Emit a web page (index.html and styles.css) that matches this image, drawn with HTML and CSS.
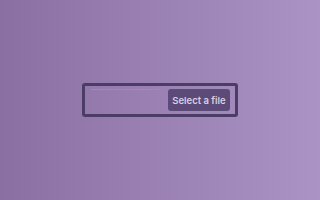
FILE: index.html
```html
<!DOCTYPE html>
<html lang="en">

<head>
    <meta charset="UTF-8">
    <title>File picker</title>
    <link rel="stylesheet" href="styles.css">
</head>

<body>
    <div class="file-field">
        <div class="file-name"></div>
        <button class="file-button">Select a file</button>
    </div>
</body>

</html>
```

FILE: styles.css
```css
* {
    box-sizing: border-box;
}

html,
body {
    height: 100%;
}

body {
    margin: 0;
    background: linear-gradient(to right, #8a6fa2, #ab93c6);
    font-family: Inter, "Noto Sans", sans-serif;
    display: flex;
    align-items: center;
    justify-content: center;
}

.file-field {
    width: 156px;
    height: 34px;
    border: 3px solid #4c3d66;
    border-radius: 3px;
    padding: 3px 5px 3px 3px;
    display: flex;
    gap: 7px;
}

.file-name {
    flex: 1;
    border-top: 1px solid #9d86cf;
    margin-left: 3px;
}

.file-button {
    width: 62px;
    height: 22px;
    border: 0;
    border-radius: 3px;
    background: #5c4b78;
    color: #d8cfe3;
    font-family: Inter, "Noto Sans", sans-serif;
    font-size: 9.5px;
    font-weight: 600;
    padding: 0;
}
```
